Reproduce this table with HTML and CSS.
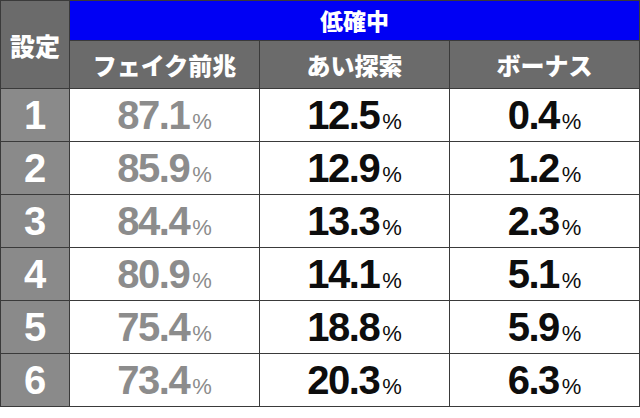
FILE: index.html
```html
<!DOCTYPE html>
<html lang="ja">
<head>
<meta charset="utf-8">
<link rel="stylesheet" href="styles.css">
</head>
<body>
<table class="tbl">
  <colgroup>
    <col class="c-set">
    <col class="c-val">
    <col class="c-val">
    <col class="c-val">
  </colgroup>
  <thead>
    <tr class="r-top">
      <th class="h-set" rowspan="2">設定</th>
      <th class="h-mode" colspan="3">低確中</th>
    </tr>
    <tr class="r-sub">
      <th class="h-sub">フェイク前兆</th>
      <th class="h-sub">あい探索</th>
      <th class="h-sub">ボーナス</th>
    </tr>
  </thead>
  <tbody>
    <tr><th class="num">1</th><td class="v gray">87.1<span class="pc">%</span></td><td class="v">12.5<span class="pc">%</span></td><td class="v">0.4<span class="pc">%</span></td></tr>
    <tr><th class="num">2</th><td class="v gray">85.9<span class="pc">%</span></td><td class="v">12.9<span class="pc">%</span></td><td class="v">1.2<span class="pc">%</span></td></tr>
    <tr><th class="num">3</th><td class="v gray">84.4<span class="pc">%</span></td><td class="v">13.3<span class="pc">%</span></td><td class="v">2.3<span class="pc">%</span></td></tr>
    <tr><th class="num">4</th><td class="v gray">80.9<span class="pc">%</span></td><td class="v">14.1<span class="pc">%</span></td><td class="v">5.1<span class="pc">%</span></td></tr>
    <tr><th class="num">5</th><td class="v gray">75.4<span class="pc">%</span></td><td class="v">18.8<span class="pc">%</span></td><td class="v">5.9<span class="pc">%</span></td></tr>
    <tr><th class="num">6</th><td class="v gray">73.4<span class="pc">%</span></td><td class="v">20.3<span class="pc">%</span></td><td class="v">6.3<span class="pc">%</span></td></tr>
  </tbody>
</table>
</body>
</html>
```
FILE: styles.css
```css
html, body {
  margin: 0;
  padding: 0;
  background: #ffffff;
}
.tbl {
  border-collapse: collapse;
  table-layout: fixed;
  width: 638px;
  font-family: "Liberation Sans", "Noto Sans CJK JP", sans-serif;
}
.c-set { width: 69px; }
.c-val { width: 190px; }
.tbl th, .tbl td {
  border: 1px solid #3a3a3a;
  padding: 0;
  text-align: center;
  vertical-align: middle;
}
.r-top { height: 40px; }
.r-sub { height: 48px; }
.h-set {
  background: #6b6b6b;
  color: #fff;
  font-family: "Noto Sans CJK JP", sans-serif;
  font-weight: 900;
  font-size: 25px;
  border-left: none;
  border-top: none;
}
.h-mode {
  background: #0000f4;
  color: #fff;
  font-family: "Noto Sans CJK JP", sans-serif;
  font-weight: 900;
  font-size: 23px;
  line-height: 1;
  border-top: none;
}
.h-sub {
  background: #6b6b6b;
  color: #fff;
  font-family: "Noto Sans CJK JP", sans-serif;
  font-weight: 900;
  font-size: 24px;
  line-height: 1;
}
tbody tr { height: 53px; }
.num {
  background: #8a8a8a;
  color: #fff;
  font-weight: 700;
  font-size: 40px;
  line-height: 1;
  border-left: none;
}
.v {
  background: #fff;
  color: #0d0d0d;
  font-weight: 700;
  font-size: 40px;
  letter-spacing: -1.5px;
  line-height: 1;
  padding-top: 4px;
}
.v.gray { color: #8c8c8c; }
.pc {
  font-size: 22px;
  font-weight: 400;
  letter-spacing: 0;
  margin-left: 3px;
}
```
